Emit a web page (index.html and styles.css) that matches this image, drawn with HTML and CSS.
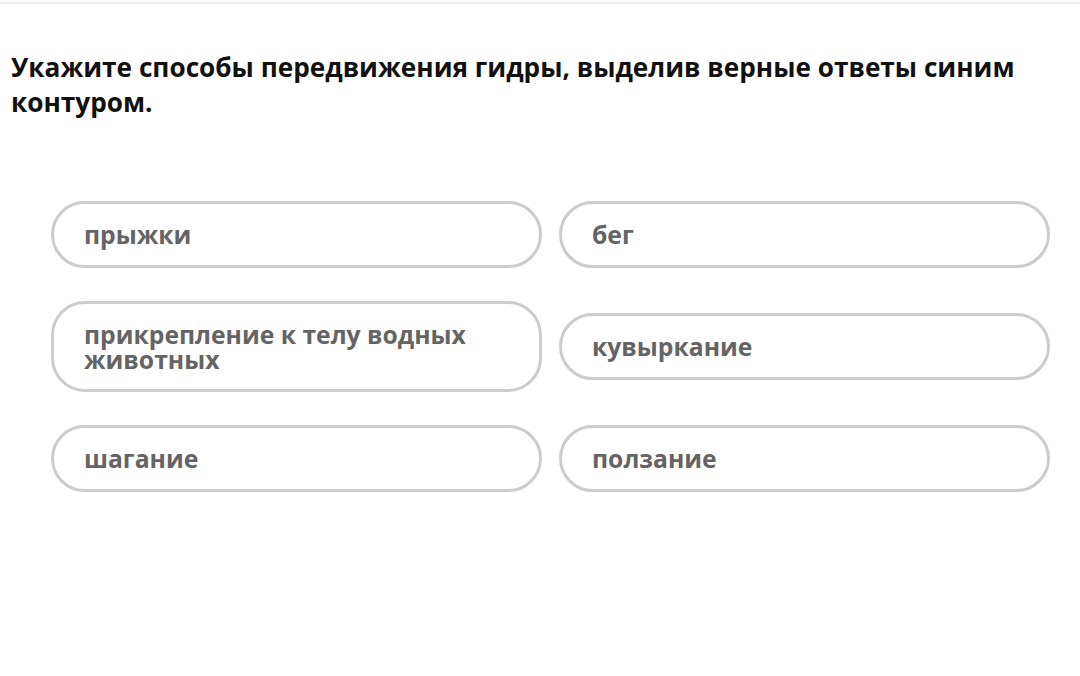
FILE: index.html
```html
<!DOCTYPE html>
<html lang="ru">
<head>
<meta charset="utf-8">
<link rel="stylesheet" href="styles.css">
</head>
<body>
<div class="topline"></div>
<main class="task">
  <h1 class="question">Укажите способы передвижения гидры, выделив верные ответы синим контуром.</h1>
  <div class="options">
    <div class="option">прыжки</div>
    <div class="option">бег</div>
    <div class="option">прикрепление к телу водных животных</div>
    <div class="option">кувыркание</div>
    <div class="option">шагание</div>
    <div class="option">ползание</div>
  </div>
</main>
</body>
</html>
```
FILE: styles.css
```css
html, body {
  margin: 0;
  padding: 0;
  background: #fff;
}
body {
  font-family: "Open Sans", "Noto Sans", sans-serif;
}
.topline {
  margin-top: 2px;
  height: 2px;
  background: #ececec;
}
.task {
  padding: 46px 0 0 11px;
}
.question {
  margin: 0;
  font-size: 26.2px;
  line-height: 35px;
  font-weight: 700;
  color: #111;
  width: 1040px;
}
.options {
  margin: 81px 0 0 40px;
  width: 999px;
  display: grid;
  grid-template-columns: 491px 491px;
  column-gap: 17px;
  row-gap: 33px;
  align-items: center;
}
.option {
  box-sizing: border-box;
  min-height: 67px;
  display: flex;
  align-items: center;
  border: 3px solid #cccccc;
  border-radius: 34px;
  padding: 17.5px 60px 17.5px 30px;
  font-size: 24.7px;
  line-height: 25px;
  font-weight: 700;
  color: #646464;
}
```
